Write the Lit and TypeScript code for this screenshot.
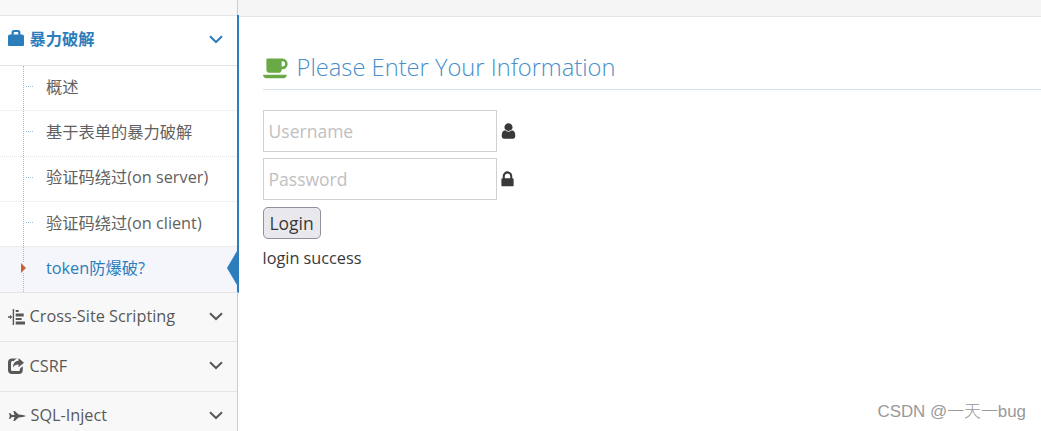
import { LitElement, html, svg, css } from 'lit';
import { customElement, property } from 'lit/decorators.js';
import { classMap } from 'lit/directives/class-map.js';

const icons = {
  bag: svg`<path fill-rule="evenodd" d="M3.300 4.500V2.500Q3.300 0 5.700 0h3.600Q11.700 0 11.700 2.500v2h1.500Q15 4.500 15 6.200V15q0 1-1 1H1q-1 0-1-1V6.200Q0 4.500 1.800 4.500zM5.400 4.500h4.200V2.600q0-.6-.6-.6H6q-.6 0-.6.6z"/>`,
  align: svg`<path d="M4.700 0h1.400v16H4.700zM0 7.300h2V5.700L4.300 8 2 10.300V8.700H0zM7.700 1h3v2h-3zM7.700 4.500h8v3h-8zM7.700 9h6v2h-6zM7.700 12.500h9.300v3H7.700z"/>`,
  share: svg`<path d="M9.200.6C7.900 1 6.700 1.900 6 3H4.600Q3 3 3 4.600v6.800Q3 13 4.600 13h5.800q1.600 0 1.600-1.600v-.8l2.800-2.300v3.600q0 4-4 4H4q-4 0-4-4V4.500q0-4 4-4z"/><path d="M10.500 0 16 4.700l-5.500 4.600V6.500C8 6.400 6.400 7.200 5 9.500 5 5.500 7 3 10.500 2.800z"/>`,
  jet: svg`<path d="M0 2h1l2 2h2.500L4.500.5V0h1.300L9.600 3.600l4.400.4 3 1-3 1-4.400.4L5.800 10H4.500v-.5L5.500 6H3L1 8H0l.6-2.300V4.300z"/>`,
  chevron: svg`<path d="M1 1.200 7 7l6-5.800" fill="none" stroke="currentColor" stroke-width="2"/>`,
  coffee: svg`<path d="M1664 640q0-80-56-136t-136-56h-64v384h64q80 0 136-56t56-136zm-1664 768h1792q0 106-75 181t-181 75h-1280q-106 0-181-75t-75-181zm1856-768q0 159-112.500 271.500t-271.500 112.500h-64v32q0 92-66 158t-158 66h-704q-92 0-158-66t-66-158v-736q0-26 19-45t45-19h1152q159 0 271.500 112.500t112.500 271.500z"/>`,
  user: svg`<path d="M1536 1399q0 109-62.500 187t-150.500 78h-854q-88 0-150.500-78t-62.500-187q0-85 8.500-160.500t31.500-152 58.500-131 94-89 134.500-34.500q131 128 313 128t313-128q76 0 134.500 34.500t94 89 58.500 131 31.500 152 8.500 160.500zm-256-887q0 159-112.500 271.500t-271.500 112.500-271.500-112.500-112.500-271.500 112.500-271.500 271.500-112.500 271.500 112.500 112.500 271.500z"/>`,
  lock: svg`<path d="M640 768h512v-192q0-106-75-181t-181-75-181 75-75 181v192zm832 96v576q0 40-28 68t-68 28h-960q-40 0-68-28t-28-68v-576q0-40 28-68t68-28h32v-192q0-184 132-316t316-132 316 132 132 316v192h32q40 0 68 28t28 68z"/>`,
};

const topics = ['概述', '基于表单的暴力破解', '验证码绕过(on server)', '验证码绕过(on client)', 'token防爆破?'];

@customElement('side-group')
export class SideGroup extends LitElement {
  @property() label = '';
  @property() icon = '';
  @property({ type: Boolean, reflect: true }) open = false;

  renderIcon() {
    switch (this.icon) {
      case 'bag':
        return html`<svg width="16" height="16" viewBox="0 0 15 16" preserveAspectRatio="none">${icons.bag}</svg>`;
      case 'align':
        return html`<svg width="17" height="16" viewBox="0 0 17 16">${icons.align}</svg>`;
      case 'share':
        return html`<svg width="16" height="16" viewBox="0 0 16 16">${icons.share}</svg>`;
      default:
        return html`<svg class="jet" width="17" height="10" viewBox="0 0 17 10">${icons.jet}</svg>`;
    }
  }

  render() {
    return html`
      <div class="head">
        <span class="icon">${this.renderIcon()}</span>
        <span class="label">${this.label}</span>
        <svg class="chevron" width="14" height="9" viewBox="0 0 14 9">${icons.chevron}</svg>
      </div>
      <slot></slot>
    `;
  }

  static styles = css`
    :host {
      display: block;
      color: #585858;
      border-bottom: 1px solid #e5e5e5;
    }

    :host([open]) {
      color: #2b7dbc;
      background: #fff;
      border-right: 2px solid #2b7dbc;
      margin-right: -2px;
      position: relative;
    }

    .head {
      display: flex;
      align-items: center;
      height: 49px;
      padding: 0 14.5px 1px 8px;
      box-sizing: border-box;
    }

    :host([open]) .head {
      height: 51px;
      padding-bottom: 3px;
      border-top: 1px solid #e5e5e5;
      border-bottom: 1px solid #e5e5e5;
      font-weight: 700;
    }

    :host([icon='align']) .label,
    :host([icon='jet']) .label {
      padding-bottom: 2px;
    }

    :host([icon='jet']) .icon {
      width: 22.5px;
    }

    .icon {
      display: flex;
      width: 21.5px;
    }

    :host([open]) .icon {
      margin-top: -2px;
    }

    .jet {
      margin-left: 0.7px;
    }

    .label {
      flex: 1;
      white-space: nowrap;
    }

    svg {
      fill: currentColor;
    }
  `;
}

@customElement('app-root')
export class AppRoot extends LitElement {
  render() {
    return html`
      <aside class="sidebar">
        <div class="shortcuts"></div>
        <side-group label="暴力破解" icon="bag" open>
          <ul class="submenu">
            ${topics.map(
              (t, i) => html`<li class=${classMap({ item: true, active: i === topics.length - 1 })}>${t}</li>`
            )}
          </ul>
        </side-group>
        <side-group class="short" label="Cross-Site Scripting" icon="align"></side-group>
        <side-group label="CSRF" icon="share"></side-group>
        <side-group label="SQL-Inject" icon="jet"></side-group>
      </aside>
      <main class="main">
        <div class="breadcrumbs"></div>
        <div class="content">
          <h4 class="title">
            <svg class="coffee" width="25.5" height="25" viewBox="0 0 1920 1792" preserveAspectRatio="none">${icons.coffee}</svg>
            <span>Please Enter Your Information</span>
          </h4>
          <div class="field">
            <input class="input" type="text" placeholder="Username" />
            <svg width="19" height="18" viewBox="0 0 1792 1792" preserveAspectRatio="none">${icons.user}</svg>
          </div>
          <div class="field">
            <input class="input" type="password" placeholder="Password" />
            <svg class="lock" width="19" height="19" viewBox="0 0 1792 1792">${icons.lock}</svg>
          </div>
          <button class="login">Login</button>
          <p class="message">login success</p>
        </div>
      </main>
      <div class="watermark">CSDN @一天一bug</div>
    `;
  }

  static styles = css`
    :host {
      display: flex;
      position: relative;
      width: 100%;
      height: 431px;
      overflow: hidden;
      background: #fff;
      color: #393939;
      font-family: 'Open Sans', 'Noto Sans CJK SC', sans-serif;
      font-size: 16.25px;
      line-height: 24px;
    }

    .sidebar {
      flex: none;
      width: 237px;
      background: #f8f8f8;
      border-right: 1px solid #ccc;
    }

    .shortcuts {
      height: 15px;
    }

    .short {
      height: 48px;
    }

    .submenu {
      position: relative;
      list-style: none;
      margin: 0;
      padding: 0;
    }

    /* tree line running down the submenu */
    .submenu::before {
      content: '';
      position: absolute;
      z-index: 1;
      left: 23px;
      top: 0;
      bottom: 0;
      border-left: 1px dotted #9dbdd6;
    }

    .item {
      position: relative;
      box-sizing: border-box;
      height: 45.4px;
      padding: 9px 0 0 46px;
      border-top: 1px dotted #e4e4e4;
      color: #616161;
      white-space: nowrap;
    }

    .item:first-child {
      height: 44.25px;
      border-top: 0;
    }

    .item:nth-child(3) {
      padding-top: 8.4px;
    }

    .item::before {
      content: '';
      position: absolute;
      left: 26px;
      top: 20px;
      width: 7px;
      border-top: 1px dotted #9dbdd6;
    }

    .item.active {
      background: #f4f6fb;
      color: #2b7dbc;
    }

    .item.active::before {
      z-index: 2;
      left: 21px;
      top: 16px;
      width: 0;
      border: 5px solid transparent;
      border-left-color: #c86139;
      border-right-width: 0;
      background: #f4f6fb;
    }

    .item.active::after {
      content: '';
      position: absolute;
      right: 0;
      top: 4px;
      border: 17px solid transparent;
      border-left-width: 0;
      border-right: 10px solid #2b7dbc;
    }

    .main {
      flex: 1;
      min-width: 0;
    }

    .breadcrumbs {
      height: 16px;
      background: #f5f5f5;
      border-bottom: 1px solid #e5e5e5;
    }

    .content {
      padding: 33px 0 0 24.6px;
    }

    .title {
      display: flex;
      align-items: center;
      gap: 8.5px;
      box-sizing: border-box;
      height: 40px;
      margin: 0 0 20px;
      padding-bottom: 5px;
      border-bottom: 1px solid #d5e3ef;
      color: #478fca;
      font-size: 23.7px;
      font-weight: 300;
    }

    .coffee {
      fill: #69aa46;
    }

    .field {
      display: flex;
      align-items: center;
      gap: 2px;
      margin-bottom: 6px;
    }

    .field svg {
      fill: #393939;
    }

    .field .lock {
      margin: 1px 0 0 -1px;
    }

    .input {
      box-sizing: border-box;
      width: 234px;
      height: 42px;
      padding: 0 5px 1px;
      border: 1px solid #d0d0d0;
      border-radius: 0;
      background: #fff;
      font: inherit;
      font-size: 17.5px;
    }

    .input::placeholder {
      color: #c0c0c0;
    }

    .login {
      display: block;
      box-sizing: border-box;
      width: 58px;
      height: 32px;
      margin-top: 7px;
      padding: 0;
      border: 1px solid #8f8f9d;
      border-radius: 5px;
      background: #e9e9ed;
      color: #393939;
      font: inherit;
      font-size: 17.5px;
    }

    .message {
      margin: 7px 0 0;
    }

    .watermark {
      position: absolute;
      right: 15px;
      bottom: 7px;
      color: #999;
      font-family: 'Liberation Sans', 'Noto Sans CJK SC', sans-serif;
      font-size: 16.9px;
      font-weight: 300;
    }
  `;
}
